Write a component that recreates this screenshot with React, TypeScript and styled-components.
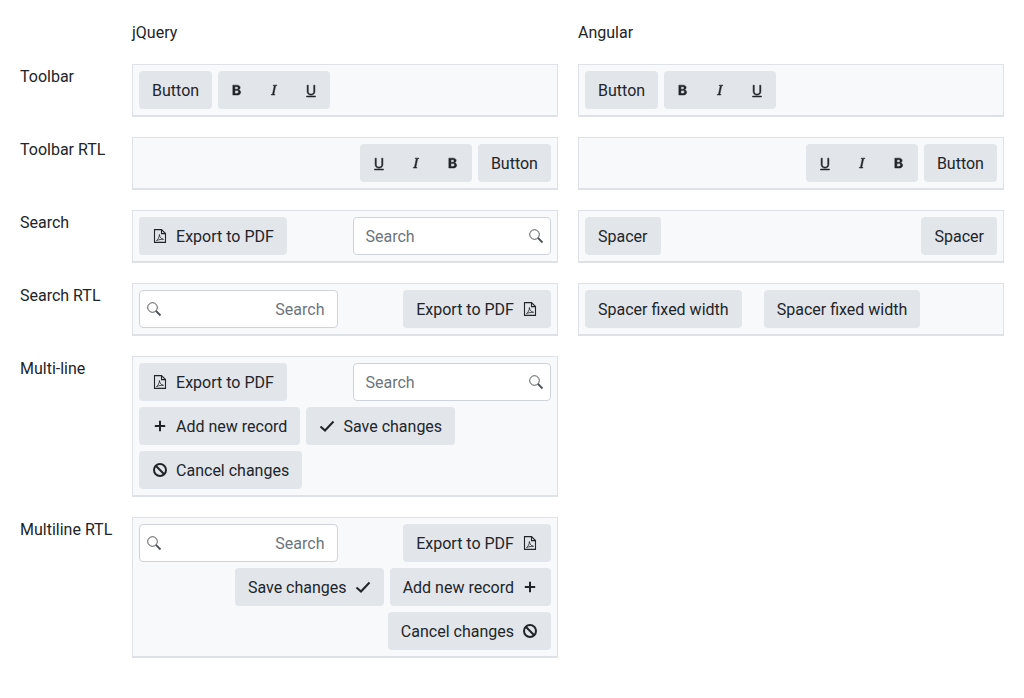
import React from "react";
import styled, { createGlobalStyle } from "styled-components";
import { BsTypeBold, BsTypeItalic, BsTypeUnderline } from "react-icons/bs";

const GlobalStyle = createGlobalStyle`
  html, body {
    margin: 0;
    padding: 0;
    background: #fff;
    color: #212529;
    font-family: Roboto, "Liberation Sans", sans-serif;
    font-size: 16px;
    line-height: 24px;
  }
`;

const Page = styled.div`
  display: grid;
  grid-template-columns: 92px 426px 426px;
  gap: 20px;
  align-items: start;
  width: 1004px;
  padding: 20px 0 0 20px;
  box-sizing: border-box;
`;

const Label = styled.div`
  padding-top: 1px;
  white-space: nowrap;
`;

const Header = styled.div`
  box-sizing: border-box;
  height: 24px;
  padding-top: 1px;
`;

const Toolbar = styled.div`
  display: flex;
  flex-wrap: wrap;
  gap: 6px;
  padding: 6px;
  background: #f8f9fb;
  border: 1px solid #dee2e6;
  border-bottom-width: 2px;
`;

const Button = styled.button`
  display: inline-flex;
  align-items: center;
  gap: 8px;
  height: 38px;
  padding: 0 13.05px;
  border: 0;
  border-radius: 4px;
  background: #e2e5ea;
  color: #212529;
  font: inherit;
  white-space: nowrap;
`;

const Caption = styled.span`
  padding-top: 2px;
`;

const Group = styled.div`
  display: inline-flex;
  height: 38px;
  padding: 0 0.5px;
  border-radius: 4px;
  background: #e2e5ea;
`;

const GroupButton = styled.button`
  display: flex;
  align-items: center;
  justify-content: center;
  width: 37px;
  padding: 0;
  border: 0;
  background: transparent;
  color: #212529;
  svg {
    stroke: currentColor;
    stroke-width: 0.5px;
  }
`;

const SearchBox = styled.label`
  position: relative;
  display: block;
  width: 198.5px;
  height: 38px;
  margin-inline-start: auto;
  svg {
    position: absolute;
    top: 11px;
    inset-inline-end: 7px;
  }
`;

const SearchInput = styled.input`
  width: 100%;
  height: 100%;
  box-sizing: border-box;
  padding: 0 32px 0 12px;
  border: 1px solid #ced4da;
  border-radius: 4px;
  background: #fff;
  color: #212529;
  font: inherit;
  &::placeholder {
    color: #6c757d;
    opacity: 1;
  }
  [dir="rtl"] & {
    padding: 0 12px 0 32px;
  }
`;

const FixedSpacer = styled.div`
  width: 10px;
`;

const Filler = styled.div`
  flex: 1;
`;

const Icon = styled.svg.attrs({ viewBox: "0 0 16 16", fill: "none" })`
  flex: none;
  width: 16px;
  height: 16px;
  color: #212529;
  stroke: currentColor;
`;

const SearchIcon = () => (
  <Icon>
    <circle cx="6.500" cy="6.500" r="4.800" strokeWidth="0.9" opacity="0.85" />
    <path d="M10 10l4.500 4.500" strokeWidth="1.800" opacity="0.8" />
  </Icon>
);

const PdfIcon = () => (
  <Icon>
    <path d="M2.500 1.600h7L13.500 5.600v8.800H2.500z" strokeWidth="1.100" />
    <path d="M9.500 1.600v4H13.500" strokeWidth="1.100" />
    <path d="M4.500 12.500c1.600-1 2.900-3.400 2.900-6 .4 2.800 1.700 4.400 4.100 4.800-2.300 0-4.600.3-7 1.200z" strokeWidth="0.8" />
  </Icon>
);

const PlusIcon = () => (
  <Icon>
    <path d="M8 2.800v10.400M2.800 8h10.400" strokeWidth="2" />
  </Icon>
);

const CheckIcon = () => (
  <Icon>
    <path d="M1.500 8.500l4.500 4L14.500 3.500" strokeWidth="2" />
  </Icon>
);

const BanIcon = () => (
  <Icon>
    <circle cx="8" cy="8" r="6" strokeWidth="2" />
    <path d="M3.800 3.800l8.400 8.400" strokeWidth="2" />
  </Icon>
);

const Search = () => (
  <SearchBox>
    <SearchInput placeholder="Search" />
    <SearchIcon />
  </SearchBox>
);

const Formatting = () => (
  <Group>
    <GroupButton>
      <BsTypeBold size={16} />
    </GroupButton>
    <GroupButton>
      <BsTypeItalic size={16} />
    </GroupButton>
    <GroupButton>
      <BsTypeUnderline size={16} />
    </GroupButton>
  </Group>
);

const Action = ({ icon, text }: { icon?: React.ReactNode; text: string }) => (
  <Button>
    {icon}
    <Caption>{text}</Caption>
  </Button>
);

const Export = () => <Action icon={<PdfIcon />} text="Export to PDF" />;

const Records = () => (
  <>
    <Action icon={<PlusIcon />} text="Add new record" />
    <Action icon={<CheckIcon />} text="Save changes" />
    <Action icon={<BanIcon />} text="Cancel changes" />
  </>
);

const Empty = () => <div />;

export default function App() {
  return (
    <>
      <GlobalStyle />
      <Page>
        <Empty />
        <Header>jQuery</Header>
        <Header>Angular</Header>

        <Label>Toolbar</Label>
        <Toolbar>
          <Action text="Button" />
          <Formatting />
        </Toolbar>
        <Toolbar>
          <Action text="Button" />
          <Formatting />
        </Toolbar>

        <Label>Toolbar RTL</Label>
        <Toolbar dir="rtl">
          <Action text="Button" />
          <Formatting />
        </Toolbar>
        <Toolbar dir="rtl">
          <Action text="Button" />
          <Formatting />
        </Toolbar>

        <Label>Search</Label>
        <Toolbar>
          <Export />
          <Search />
        </Toolbar>
        <Toolbar>
          <Action text="Spacer" />
          <Filler />
          <Action text="Spacer" />
        </Toolbar>

        <Label>Search RTL</Label>
        <Toolbar dir="rtl">
          <Export />
          <Search />
        </Toolbar>
        <Toolbar>
          <Action text="Spacer fixed width" />
          <FixedSpacer />
          <Action text="Spacer fixed width" />
        </Toolbar>

        <Label>Multi-line</Label>
        <Toolbar>
          <Export />
          <Search />
          <Records />
        </Toolbar>
        <Empty />

        <Label>Multiline RTL</Label>
        <Toolbar dir="rtl">
          <Export />
          <Search />
          <Records />
        </Toolbar>
        <Empty />
      </Page>
    </>
  );
}
